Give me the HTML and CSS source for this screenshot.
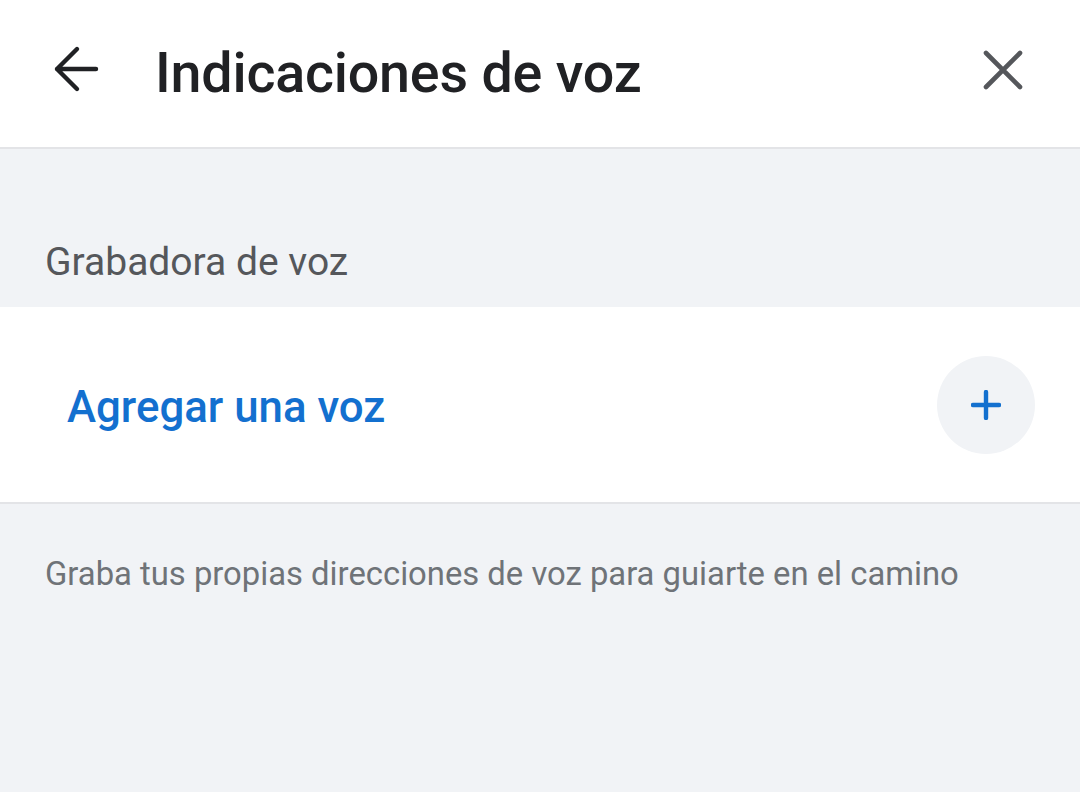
FILE: index.html
```html
<!doctype html>
<html>
<head>
<meta charset="utf-8">
<title>Indicaciones de voz</title>
<link rel="stylesheet" href="styles.css">
</head>
<body>
	<div class="top_bar">
		<span class="icon_btn back">
			<svg width="48" height="48" viewBox="0 0 48 48"><path d="M45 24H6M26 4L6 24l20 20" fill="none" stroke="#202124" stroke-width="4.4" stroke-linecap="round" stroke-linejoin="round"/></svg>
		</span>
		<h1 class="title">Indicaciones de voz</h1>
		<span class="icon_btn close">
			<svg width="40" height="40" viewBox="0 0 40 40"><path d="M3 3l34 34M37 3L3 37" fill="none" stroke="#55575b" stroke-width="4.6" stroke-linecap="round"/></svg>
		</span>
	</div>
	<div class="section_head">Grabadora de voz</div>
	<div class="row">
		<span class="row_text">Agregar una voz</span>
		<span class="add_btn">
			<svg width="30" height="30" viewBox="0 0 30 30"><path d="M15 2v26M2 15h26" fill="none" stroke="#1370cf" stroke-width="4.4" stroke-linecap="round"/></svg>
		</span>
	</div>
	<p class="hint">Graba tus propias direcciones de voz para guiarte en el camino</p>
</body>
</html>
```

FILE: styles.css
```css
body{ margin:0; background:#f1f3f6; font-family:Roboto, 'Noto Sans', sans-serif; height:792px; overflow:hidden;}
.top_bar{ height:147px; background:#fff; border-bottom:2px solid #e3e4e7; display:flex; align-items:center; padding:0 57px 0 51px;}
.icon_btn{ display:flex; align-items:center; justify-content:center;}
.back svg{ display:block; margin-top:-9px;}
.title{ margin:-2px 0 0 56px; flex:1; font-size:55.6px; font-weight:500; color:#202124; letter-spacing:-0.2px;}
.close svg{ display:block; margin-top:-7px;}
.section_head{ padding:91px 45px 0; height:67px; font-size:39px; color:#55575b; line-height:44px;}
.row{ height:195px; background:#fff; border-bottom:2px solid #e3e4e7; display:flex; align-items:center; padding:0 45px 0 67px;}
.row_text{ flex:1; font-size:43.8px; font-weight:500; color:#1370cf; margin-top:4px;}
.add_btn{ width:98px; height:98px; border-radius:50%; background:#f1f3f6; display:flex; align-items:center; justify-content:center;}
.add_btn svg{ display:block;}
.hint{ margin:51px 45px 0; font-size:32.8px; color:#6f7378; line-height:38px;}
```
